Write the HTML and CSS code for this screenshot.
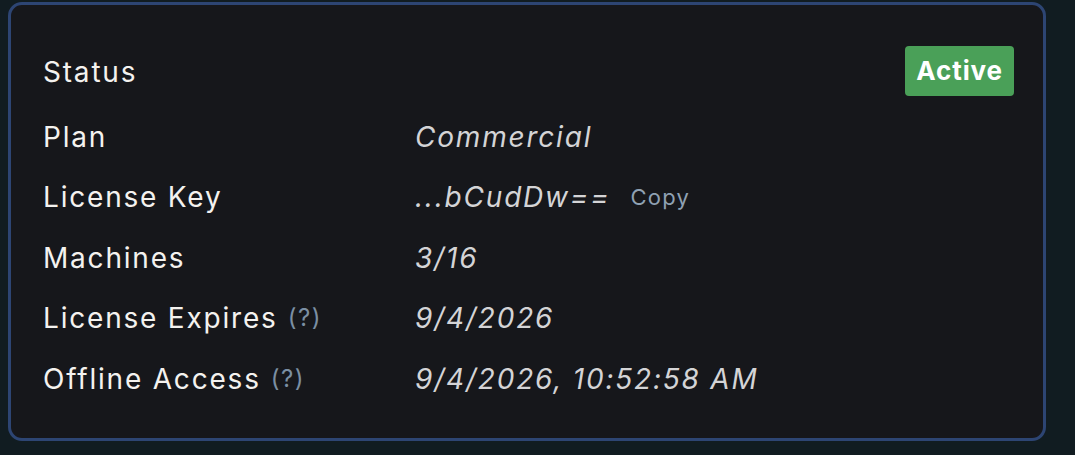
FILE: index.html
```html
<!DOCTYPE html>
<html>
<head>
<meta charset="utf-8">
<link rel="stylesheet" href="styles.css">
</head>
<body>
<div class="card">
  <div class="grid">
    <div class="label status-label">Status</div>
    <div class="value status-value"><span class="badge">Active</span></div>

    <div class="label">Plan</div>
    <div class="value">Commercial</div>

    <div class="label">License Key</div>
    <div class="value">...bCudDw== <span class="copy">Copy</span></div>

    <div class="label">Machines</div>
    <div class="value">3/16</div>

    <div class="label">License Expires <span class="help">(?)</span></div>
    <div class="value">9/4/2026</div>

    <div class="label">Offline Access <span class="help">(?)</span></div>
    <div class="value">9/4/2026, 10:52:58 AM</div>
  </div>
</div>
</body>
</html>
```
FILE: styles.css
```css
html, body {
  margin: 0;
  padding: 0;
  background: #111c21;
  font-family: Inter, "Noto Sans", sans-serif;
}
.card {
  margin: 2px 29px 0 8px;
  height: 392px;
  border: 3px solid #2d4573;
  border-radius: 14px;
  background: #16171b;
  padding: 41px 29px 0 32px;
  box-sizing: content-box;
}
.grid {
  display: grid;
  grid-template-columns: 372px 1fr;
  grid-template-rows: 52px;
  grid-auto-rows: 44px;
  row-gap: 16.5px;
}
.label {
  color: #f4f2ef;
  font-size: 28px;
  letter-spacing: 1.8px;
  line-height: 44px;
  display: flex;
  align-items: center;
}
.value {
  color: #d4d4d6;
  font-size: 28px;
  letter-spacing: 1.8px;
  font-style: italic;
  line-height: 44px;
  display: flex;
  align-items: center;
}
.status-label {
  align-items: flex-start;
  padding-top: 4px;
}
.status-value {
  justify-content: flex-end;
  align-items: flex-start;
}
.badge {
  background: #4aa058;
  color: #ffffff;
  font-style: normal;
  font-weight: 700;
  font-size: 26px;
  letter-spacing: 0.9px;
  line-height: 50px;
  height: 50px;
  padding: 0 11px;
  border-radius: 4px;
}
.copy {
  font-style: normal;
  font-size: 22px;
  letter-spacing: 1.2px;
  color: #8fa1b3;
  margin-left: 20px;
}
.help {
  font-size: 24px;
  letter-spacing: 1.5px;
  color: #7b8fa3;
  margin-left: 10px;
}
```
